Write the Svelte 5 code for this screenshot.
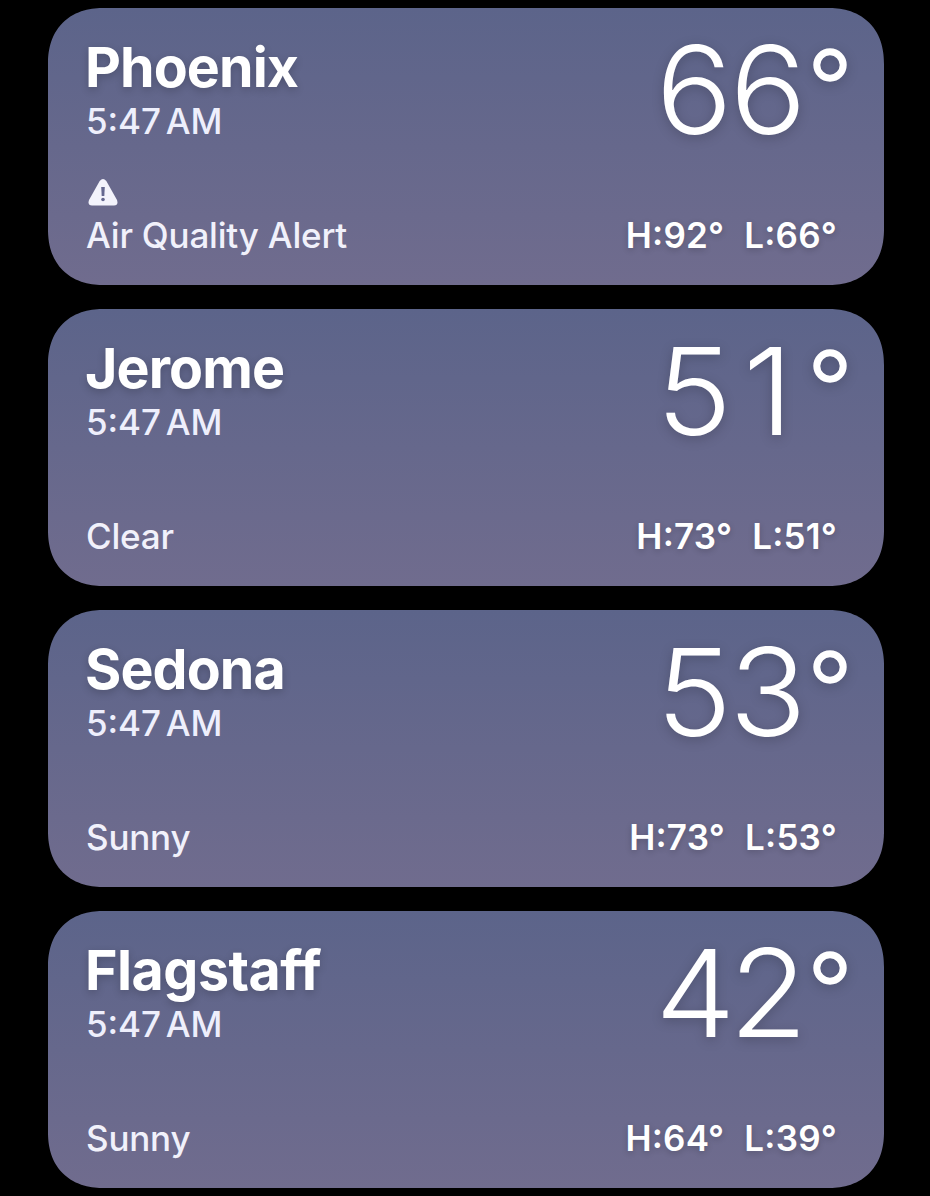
<script>
  const cities = [
    { name: 'Phoenix', note: 'Air Quality Alert', alert: true, temp: '66', hi: 92, lo: 66 },
    { name: 'Jerome', note: 'Clear', temp: '51', hi: 73, lo: 51 },
    { name: 'Sedona', note: 'Sunny', temp: '53', hi: 73, lo: 53 },
    { name: 'Flagstaff', note: 'Sunny', temp: '42', hi: 64, lo: 39 }
  ];
</script>

<main>
  {#each cities as c}
    <section class="card">
      <div class="left">
        <h2 class:ff={c.name === 'Flagstaff'}>{c.name}</h2>
        <div class="time">5<i>:</i>47<span>AM</span></div>
        <div class="icon">
          {#if c.alert}
            <svg width="30" height="27" viewBox="0 0 30 27"><path d="M11.7 2Q15-2 18.3 2L29 21Q30.7 26.2 26 26.5H4Q-.7 26.2 1 21Z" fill="#f3f3fc"/><path d="M13.2 8h3.6l-.5 9h-2.6Z" fill="#656891"/><circle cx="15" cy="20.5" r="1.8" fill="#656891"/></svg>
          {/if}
        </div>
        <div class="note">{c.note}</div>
      </div>
      <div class="right">
        <div class="temp">{#each c.temp as d}<span>{d}</span>{/each}<svg class="deg" width="34" height="34" viewBox="0 0 34 34"><circle cx="17" cy="17" r="13.2" fill="none" stroke="#fff" stroke-width="7"/></svg></div>
        <div class="range"><span>H<i>:</i>{c.hi}°</span><span>L<i>:</i>{c.lo}°</span></div>
      </div>
    </section>
  {/each}
</main>

<style>
  :global(body) { background: #000; overflow: hidden; }
  main { box-sizing: border-box; width: 930px; height: 1196px; padding: 8px 46px 0 48px; display: flex; flex-direction: column; gap: 24px; overflow: hidden; background: #000; font-family: Inter, sans-serif; color: #fff; }
  .card { flex: 0 0 277px; box-sizing: border-box; display: flex; justify-content: space-between; padding: 0 37px 0 38px; border-radius: 50px; background: linear-gradient(#5c648a, #706c8e); }
  @supports (corner-shape: squircle) {
    .card { border-radius: 56px; corner-shape: superellipse(1.18); }
  }
  .left, .right { display: flex; flex-direction: column; }
  h2 { margin: 27px 0 0 -1px; font-size: 55.5px; line-height: 64px; font-weight: 690; letter-spacing: -.9px; text-shadow: 0 3px 8px #0003; }
  h2.ff { letter-spacing: -.5px; font-variant-ligatures: none; }
  .time { margin-top: 1px; font-size: 35px; line-height: 42px; font-weight: 500; color: #eeeffc; letter-spacing: -.1px; }
  .time span { margin-left: 5px; }
  .icon { height: 27px; margin-top: 37px; }
  .icon svg { display: block; margin-left: 2px; }
  .note { margin-top: 8px; font-size: 35px; line-height: 42px; font-weight: 460; letter-spacing: -.2px; color: #f1f1fb; }
  .right { align-items: flex-end; }
  .temp { display: flex; height: 165px; padding-top: 27px; box-sizing: border-box; font-size: 121.5px; line-height: 110px; font-weight: 330; font-variation-settings: 'opsz' 14; filter: drop-shadow(0 3px 6px #0003); }
  .temp span { width: 74px; text-align: center; transform: scaleX(1.05); }
  .deg { margin: 13px 0 0 8px; }
  .range { display: flex; gap: 20px; margin: 41px 10px 0 0; font-size: 35px; line-height: 42px; font-weight: 600; letter-spacing: .2px; text-shadow: 0 2px 6px #0003; }
  i { font-style: normal; position: relative; top: -3px; }
</style>
